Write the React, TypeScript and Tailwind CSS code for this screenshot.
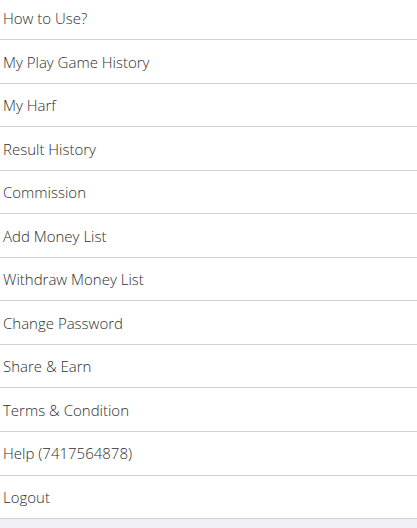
const items = [
  "How to Use?",
  "My Play Game History",
  "My Harf",
  "Result History",
  "Commission",
  "Add Money List",
  "Withdraw Money List",
  "Change Password",
  "Share & Earn",
  "Terms & Condition",
  "Help (7417564878)",
  "Logout",
];

export default function App() {
  return (
    <div className="h-[528px] w-full overflow-hidden bg-[#f0eff4] font-['Open_Sans',sans-serif]">
      <ul className="-mt-[3.5px] bg-white">
        {items.map((label) => (
          <li
            key={label}
            className="flex h-[43.55px] items-center border-b-[1.5px] border-[#d2d2d2] pl-[3px] pt-[1px] text-[15px] font-light text-[#2e2e2e]"
          >
            {label}
          </li>
        ))}
      </ul>
    </div>
  );
}
